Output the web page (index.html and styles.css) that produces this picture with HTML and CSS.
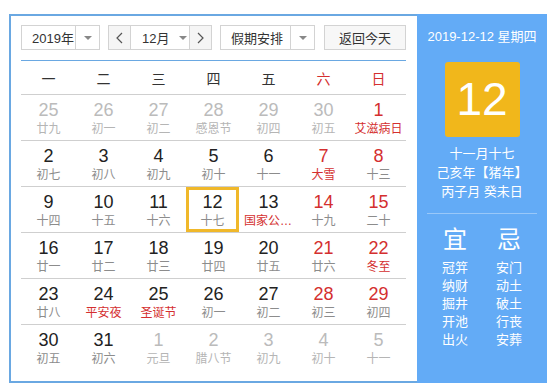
FILE: index.html
```html
<!DOCTYPE html>
<html lang="zh-CN">
<head>
  <meta charset="UTF-8" />
  <title>万年历</title>
  <link rel="stylesheet" href="styles.css">
</head>
<body>

<div class="calendar">
  <div class="main">
    <div class="toolbar">
      <div class="select year"><span class="label">2019年</span><span class="drop"><i class="caret"></i></span></div>
      <div class="month-group">
        <button class="nav"><svg width="7" height="12" viewBox="0 0 7 12"><polyline points="6,1 1,6 6,11" fill="none" stroke="#555" stroke-width="1.2"/></svg></button>
        <div class="month"><span>12月</span><i class="caret"></i></div>
        <button class="nav"><svg width="7" height="12" viewBox="0 0 7 12"><polyline points="1,1 6,6 1,11" fill="none" stroke="#555" stroke-width="1.2"/></svg></button>
      </div>
      <div class="select holiday"><span class="label">假期安排</span><span class="drop"><i class="caret"></i></span></div>
      <button class="today-btn">返回今天</button>
    </div>

    <div class="week">
      <span>一</span><span>二</span><span>三</span><span>四</span><span>五</span><span class="red">六</span><span class="red">日</span>
    </div>

    <div class="days">
      <div class="row">
        <div class="day other"><b>25</b><span>廿九</span></div>
        <div class="day other"><b>26</b><span>初一</span></div>
        <div class="day other"><b>27</b><span>初二</span></div>
        <div class="day other"><b>28</b><span>感恩节</span></div>
        <div class="day other"><b>29</b><span>初四</span></div>
        <div class="day other"><b>30</b><span>初五</span></div>
        <div class="day rest"><b>1</b><span class="fest">艾滋病日</span></div>
      </div>
      <div class="row">
        <div class="day"><b>2</b><span>初七</span></div>
        <div class="day"><b>3</b><span>初八</span></div>
        <div class="day"><b>4</b><span>初九</span></div>
        <div class="day"><b>5</b><span>初十</span></div>
        <div class="day"><b>6</b><span>十一</span></div>
        <div class="day rest"><b>7</b><span class="fest">大雪</span></div>
        <div class="day rest"><b>8</b><span>十三</span></div>
      </div>
      <div class="row">
        <div class="day"><b>9</b><span>十四</span></div>
        <div class="day"><b>10</b><span>十五</span></div>
        <div class="day"><b>11</b><span>十六</span></div>
        <div class="day current"><b>12</b><span>十七</span></div>
        <div class="day"><b>13</b><span class="fest">国家公祭日</span></div>
        <div class="day rest"><b>14</b><span>十九</span></div>
        <div class="day rest"><b>15</b><span>二十</span></div>
      </div>
      <div class="row">
        <div class="day"><b>16</b><span>廿一</span></div>
        <div class="day"><b>17</b><span>廿二</span></div>
        <div class="day"><b>18</b><span>廿三</span></div>
        <div class="day"><b>19</b><span>廿四</span></div>
        <div class="day"><b>20</b><span>廿五</span></div>
        <div class="day rest"><b>21</b><span>廿六</span></div>
        <div class="day rest"><b>22</b><span class="fest">冬至</span></div>
      </div>
      <div class="row">
        <div class="day"><b>23</b><span>廿八</span></div>
        <div class="day"><b>24</b><span class="fest">平安夜</span></div>
        <div class="day"><b>25</b><span class="fest">圣诞节</span></div>
        <div class="day"><b>26</b><span>初一</span></div>
        <div class="day"><b>27</b><span>初二</span></div>
        <div class="day rest"><b>28</b><span>初三</span></div>
        <div class="day rest"><b>29</b><span>初四</span></div>
      </div>
      <div class="row last">
        <div class="day"><b>30</b><span>初五</span></div>
        <div class="day"><b>31</b><span>初六</span></div>
        <div class="day other"><b>1</b><span>元旦</span></div>
        <div class="day other"><b>2</b><span>腊八节</span></div>
        <div class="day other"><b>3</b><span>初九</span></div>
        <div class="day other"><b>4</b><span>初十</span></div>
        <div class="day other"><b>5</b><span>十一</span></div>
      </div>
    </div>
  </div>

  <div class="side">
    <div class="side-date">2019-12-12 星期四</div>
    <div class="big-day">12</div>
    <div class="lunar">
      <p>十一月十七</p>
      <p>己亥年【猪年】</p>
      <p>丙子月 癸未日</p>
    </div>
    <div class="almanac">
      <div class="col">
        <h3>宜</h3>
        <p>冠笄</p><p>纳财</p><p>掘井</p><p>开池</p><p>出火</p>
      </div>
      <div class="col">
        <h3>忌</h3>
        <p>安门</p><p>动土</p><p>破土</p><p>行丧</p><p>安葬</p>
      </div>
    </div>
  </div>
</div>

</body>
</html>
```

FILE: styles.css
```css
* { margin: 0; padding: 0; box-sizing: border-box; }
body {
  font-family: "Liberation Sans", "Noto Sans CJK SC", sans-serif;
  background: #fff;
  color: #333;
  padding: 14px 0 0 9px;
}

.calendar {
  display: flex;
  width: 538px;
  height: 369px;
}

.main {
  width: 408px;
  border: 2px solid #6aa8e2;
  border-right: none;
  background: #fff;
  padding: 9px 11px 0 10px;
}

/* toolbar */
.toolbar {
  display: flex;
  height: 36px;
  padding-bottom: 11px;
  border-bottom: 1px solid #6aa8e2;
  font-size: 13px;
  color: #333;
}

.select, .month-group, .today-btn {
  height: 25px;
  border: 1px solid #d3d3d3;
  display: flex;
  align-items: center;
  background: #fff;
}

.select .label {
  flex: 1;
  padding-left: 10px;
}

.select .drop {
  width: 24px;
  height: 100%;
  border-left: 1px solid #d3d3d3;
  display: flex;
  align-items: center;
  justify-content: center;
}

.year { width: 79px; margin-right: 8px; }
.holiday { width: 95px; margin-right: 9px; }

.caret {
  display: inline-block;
  width: 0;
  height: 0;
  border-left: 4px solid transparent;
  border-right: 4px solid transparent;
  border-top: 4px solid #888;
}

.month-group { width: 104px; margin-right: 8px; }

.nav {
  width: 22px;
  height: 100%;
  border: none;
  background: #f5f5f5;
  display: flex;
  align-items: center;
  justify-content: center;
  cursor: pointer;
}

.nav:first-child { border-right: 1px solid #d3d3d3; }
.nav:last-child { border-left: 1px solid #d3d3d3; }

.month {
  flex: 1;
  display: flex;
  align-items: center;
  padding-left: 11px;
  gap: 10px;
}

.today-btn {
  width: 82px;
  justify-content: center;
  background: #f7f7f7;
  font-family: inherit;
  font-size: 13px;
  color: #333;
  cursor: pointer;
}

/* week header */
.week {
  display: grid;
  grid-template-columns: repeat(7, 55px);
  height: 34px;
  border-bottom: 1px solid #cfcfcf;
  align-items: center;
  text-align: center;
  font-size: 14px;
  color: #333;
}

.week .red { color: #d42f2f; }

/* day grid */
.row {
  display: grid;
  grid-template-columns: repeat(7, 55px);
  height: 46px;
  border-bottom: 1px solid #cfcfcf;
}

.row.last { border-bottom: none; }

.day {
  display: flex;
  flex-direction: column;
  align-items: center;
  padding-top: 5px;
  min-width: 0;
}

.day b {
  font-weight: normal;
  font-size: 18px;
  line-height: 20px;
  color: #222;
}

.day span {
  font-size: 12px;
  line-height: 18px;
  color: #8c8c8c;
  max-width: 100%;
  padding: 0 3px;
  white-space: nowrap;
  overflow: hidden;
  text-overflow: ellipsis;
}

.day.rest b { color: #d42f2f; }
.day span.fest { color: #d42f2f; }
.day.other b { color: #bbb; }
.day.other span { color: #b5b5b5; }

.day.current {
  margin-right: 2px;
  box-shadow: inset 0 0 0 3px #f0b82a;
}

/* side panel */
.side {
  width: 130px;
  background: #63abf6;
  color: #fff;
  display: flex;
  flex-direction: column;
  align-items: center;
  padding-top: 13px;
}

.side-date {
  font-size: 13px;
  line-height: 20px;
}

.big-day {
  width: 75px;
  height: 75px;
  margin-top: 15px;
  background: #f1b71b;
  border-radius: 3px;
  font-size: 46px;
  line-height: 75px;
  text-align: center;
  color: #fff;
}

.lunar {
  margin-top: 7px;
  text-align: center;
  font-size: 13px;
  line-height: 19px;
  width: 110px;
  padding-bottom: 12px;
  border-bottom: 1px solid rgba(255, 255, 255, 0.35);
}

.almanac {
  display: flex;
  gap: 28px;
  margin-top: 11px;
}

.almanac .col {
  width: 26px;
  text-align: center;
}

.almanac h3 {
  font-weight: normal;
  font-size: 24px;
  line-height: 30px;
  margin-bottom: 4px;
}

.almanac p {
  font-size: 13px;
  line-height: 18px;
}
```
